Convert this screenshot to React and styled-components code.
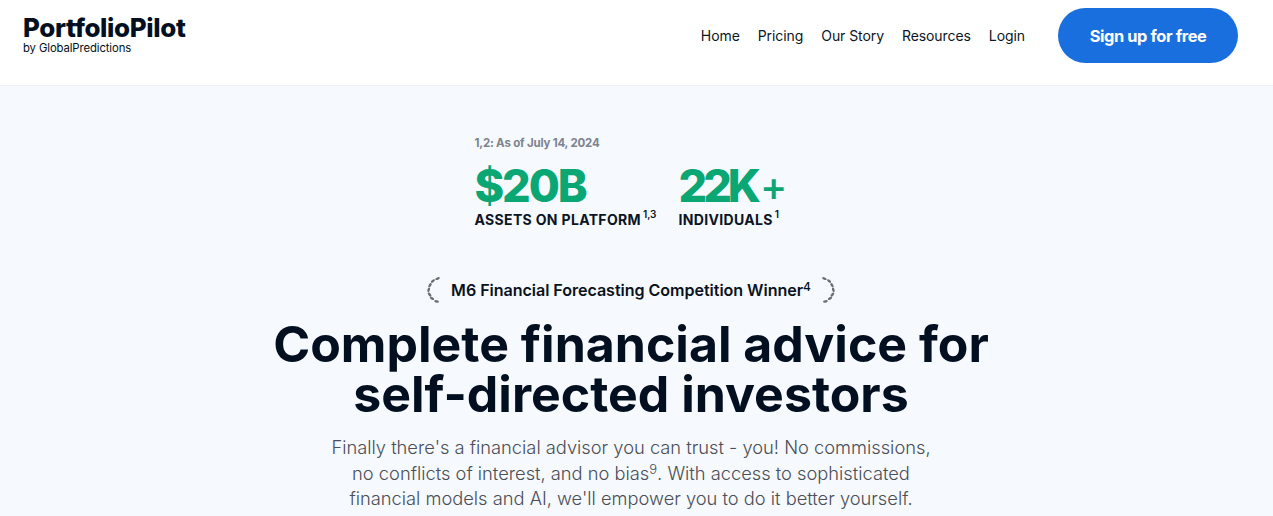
import React from 'react';
import styled, { createGlobalStyle } from 'styled-components';

const Global = createGlobalStyle`
	html, body {
		margin: 0;
		padding: 0;
		background: #f6f9fe;
		overflow: hidden;
	}
	body {
		font-family: Inter, "Liberation Sans", sans-serif;
		color: #020f20;
	}
`;

const Header = styled.header`
	display: flex;
	align-items: flex-start;
	justify-content: space-between;
	height: 77px;
	padding: 8px 35px 0 23px;
	background: #fff;
	border-bottom: 1px solid #eef2f8;
`;

const Logo = styled.div`
	display: flex;
	flex-direction: column;
	margin-top: 6px;
`;

const LogoName = styled.span`
	font-size: 25.9px;
	font-weight: 800;
	line-height: 27px;
	letter-spacing: -0.35px;
`;

const LogoBy = styled.span`
	font-size: 11.3px;
	font-weight: 400;
	line-height: 14px;
	letter-spacing: -0.1px;
`;

const Nav = styled.nav`
	display: flex;
	align-items: center;
`;

const NavLink = styled.a`
	margin-right: 18px;
	font-size: 14px;
	line-height: 20px;
	letter-spacing: -0.08px;
	color: #0b1626;
`;

const SignUp = styled.a`
	display: flex;
	align-items: center;
	justify-content: center;
	width: 180px;
	height: 55px;
	margin-left: 15px;
	border-radius: 28px;
	background: #1a6fdf;
	color: #fff;
	font-size: 16.4px;
	font-weight: 700;
	letter-spacing: -0.4px;
`;

const Main = styled.main`
	display: flex;
	flex-direction: column;
	align-items: center;
	padding: 49px 11px 0 0;
	text-align: center;
`;

const Stats = styled.section`
	display: flex;
	flex-direction: column;
	align-items: flex-start;
	margin-right: 4px;
	text-align: left;
`;

const AsOf = styled.div`
	font-size: 11.5px;
	font-weight: 700;
	line-height: 16px;
	letter-spacing: -0.2px;
	color: #7d838f;
`;

const StatRow = styled.div`
	display: flex;
	gap: 22px;
	margin-top: 8px;
`;

const Stat = styled.div`
	display: flex;
	flex-direction: column;
`;

const StatValue = styled.div`
	display: flex;
	font-size: 45px;
	font-weight: 800;
	line-height: 54px;
	letter-spacing: ${({ $tight }) => ($tight ? '-4px' : '-2.1px')};
	color: #0aa674;
`;

const Plus = styled.span`
	margin-left: 3px;
	font-size: 41px;
	font-weight: 500;
`;

const StatLabel = styled.div`
	margin-top: -3px;
	font-size: 14px;
	font-weight: 700;
	line-height: 20px;
	letter-spacing: 0.33px;
	color: #0c1524;

	sup {
		margin-left: 2px;
		font-size: 10px;
		font-weight: 600;
		letter-spacing: 0;
		line-height: 0;
		vertical-align: 7px;
	}
`;

const Award = styled.div`
	display: flex;
	align-items: center;
	gap: 10px;
	margin-top: 46px;
`;

const AwardText = styled.span`
	font-size: 16.1px;
	font-weight: 600;
	line-height: 28px;
	letter-spacing: -0.05px;
	color: #0a1220;

	sup {
		font-size: 12px;
		font-weight: 500;
		line-height: 0;
		vertical-align: 5px;
	}
`;

const Title = styled.h1`
	margin: 15px 0 0;
	font-size: 50px;
	font-weight: 700;
	line-height: 50px;
	color: #020f20;
`;

const Lead = styled.p`
	margin: 16px 0 0;
	font-size: 18.3px;
	font-weight: 300;
	line-height: 25.5px;
	color: #4a4f58;

	sup {
		font-size: 13px;
		line-height: 0;
		vertical-align: 6px;
	}
`;

const leaves = [
	[10.6, 2.6, 70],
	[5.9, 5, 52],
	[3, 9.2, 34],
	[1.7, 13.8, 14],
	[2.6, 18.6, -42],
	[5, 22.4, -60],
	[9.6, 25.4, -82],
];

const Laurel = ({ flip }) => (
	<svg
		width="14"
		height="28"
		viewBox="0 0 14 28"
		fill="#6b6f74"
		style={flip ? { transform: 'scaleX(-1)' } : undefined}
	>
		{leaves.map(([x, y, angle], i) => (
			<ellipse
				key={`leaf-${i}`}
				cx={x}
				cy={y}
				rx="1.25"
				ry="2.4"
				transform={`rotate(${angle} ${x} ${y})`}
			/>
		))}
	</svg>
);

const links = ['Home', 'Pricing', 'Our Story', 'Resources', 'Login'];

const App = () => (
	<>
		<Global />
		<Header>
			<Logo>
				<LogoName>PortfolioPilot</LogoName>
				<LogoBy>by GlobalPredictions</LogoBy>
			</Logo>
			<Nav>
				{links.map(link => (
					<NavLink key={link}>{link}</NavLink>
				))}
				<SignUp>Sign up for free</SignUp>
			</Nav>
		</Header>
		<Main>
			<Stats>
				<AsOf>1,2: As of July 14, 2024</AsOf>
				<StatRow>
					<Stat>
						<StatValue>$20B</StatValue>
						<StatLabel>ASSETS ON PLATFORM<sup>1,3</sup></StatLabel>
					</Stat>
					<Stat>
						<StatValue $tight>22K<Plus>+</Plus></StatValue>
						<StatLabel>INDIVIDUALS<sup>1</sup></StatLabel>
					</Stat>
				</StatRow>
			</Stats>
			<Award>
				<Laurel />
				<AwardText>M6 Financial Forecasting Competition Winner<sup>4</sup></AwardText>
				<Laurel flip />
			</Award>
			<Title>
				Complete financial advice for
				<br />
				self-directed investors
			</Title>
			<Lead>
				Finally there's a financial advisor you can trust - you! No commissions,
				<br />
				no conflicts of interest, and no bias<sup>9</sup>. With access to sophisticated
				<br />
				financial models and AI, we'll empower you to do it better yourself.
			</Lead>
		</Main>
	</>
);

export default App;
